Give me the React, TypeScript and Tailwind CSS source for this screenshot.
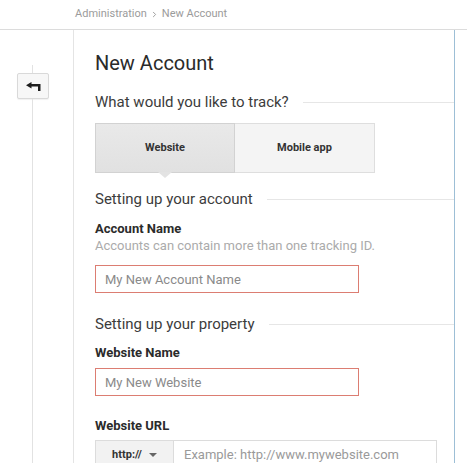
import { ChevronRight } from 'lucide-react'

function SectionTitle({ children }: { children: string }) {
  return (
    <div className="flex items-center gap-[14px]">
      <span className="text-[15px] leading-[20px] text-[#3c3c3c] whitespace-nowrap">
        {children}
      </span>
      <div className="h-px flex-1 bg-[#e6e6e6]" />
    </div>
  )
}

function BackIcon() {
  return (
    <svg width="15" height="9" viewBox="0 0 15 9" fill="#1e1e1e">
      <path d="M0 3.2 L5.5 0 V2 H14.5 V9 H12 V4.5 H5.5 V6.4 Z" />
    </svg>
  )
}

export default function App() {
  return (
    <div className="w-[467px] h-[463px] overflow-hidden bg-white flex flex-col font-['Roboto',sans-serif]">
      <header className="h-[30px] shrink-0 border-b border-[#dcdcdc] pl-[75px] flex items-center text-[11px] text-[#9b9b9b]">
        <span>Administration</span>
        <ChevronRight className="size-[9px] mx-[3px]" strokeWidth={2.5} />
        <span>New Account</span>
      </header>

      <div className="flex flex-1 min-h-0">
        <aside className="w-[73px] shrink-0 flex flex-col items-start">
          <div className="h-[35px]" />
          <div className="ml-[32px] w-px h-[8px] bg-[#e2e2e2]" />
          <button className="ml-[17px] w-[32px] h-[26px] rounded-[2px] border border-[#d9d9d9] bg-[#f7f7f7] flex items-center justify-center shadow-[0_1px_1px_rgba(0,0,0,0.06)]">
            <BackIcon />
          </button>
          <div className="ml-[32px] w-px flex-1 bg-[#e2e2e2]" />
        </aside>

        <main className="w-[382px] shrink-0 border-l border-[#e4e4e4] border-r border-r-[#9dbfd6] pl-[21px] pt-[21px]">
          <h1 className="text-[20px] leading-[24px] text-[#2a2a2a]">New Account</h1>

          <div className="mt-[17px]">
            <SectionTitle>What would you like to track?</SectionTitle>
          </div>

          <div className="mt-[11px] flex w-[280px] h-[50px] text-[11px] font-bold text-[#333]">
            <button className="relative w-[140px] border border-[#d2d2d2] bg-gradient-to-b from-[#e9e9e9] to-[#e1e1e1]">
              Website
              <span className="absolute left-1/2 top-full -translate-x-1/2 w-0 h-0 border-l-[7px] border-r-[7px] border-t-[6px] border-l-transparent border-r-transparent border-t-[#e3e3e3]" />
            </button>
            <button className="w-[140px] border border-l-0 border-[#dedede] bg-[#f4f4f4]">
              Mobile app
            </button>
          </div>

          <div className="mt-[16px]">
            <SectionTitle>Setting up your account</SectionTitle>
          </div>

          <div className="mt-[12px] text-[13px] leading-[16px] font-bold text-[#2b2b2b]">
            Account Name
          </div>
          <div className="mt-[1px] text-[13px] leading-[16px] text-[#ababab]">
            Accounts can contain more than one tracking ID.
          </div>
          <input
            className="mt-[11px] block w-[264px] h-[28px] border border-[#dc7d72] px-[9px] text-[13px] text-[#333] placeholder:text-[#8a8a8a] outline-none"
            placeholder="My New Account Name"
          />

          <div className="mt-[21px]">
            <SectionTitle>Setting up your property</SectionTitle>
          </div>

          <div className="mt-[11px] text-[13px] leading-[16px] font-bold text-[#2b2b2b]">
            Website Name
          </div>
          <input
            className="mt-[7px] block w-[264px] h-[28px] border border-[#dc7d72] px-[9px] text-[13px] text-[#333] placeholder:text-[#8a8a8a] outline-none"
            placeholder="My New Website"
          />

          <div className="mt-[22px] text-[13px] leading-[16px] font-bold text-[#2b2b2b]">
            Website URL
          </div>
          <div className="mt-[6px] flex w-[342px] h-[30px]">
            <button className="w-[79px] shrink-0 border border-[#dcdcdc] bg-[#f2f2f2] flex items-center justify-center gap-[7px] text-[11px] font-bold text-[#333]">
              <span>http://</span>
              <span className="w-0 h-0 border-l-[4px] border-r-[4px] border-t-[4px] border-l-transparent border-r-transparent border-t-[#666]" />
            </button>
            <input
              className="flex-1 min-w-0 border border-l-0 border-[#dcdcdc] px-[10px] text-[13px] text-[#333] placeholder:text-[#9a9a9a] outline-none"
              placeholder="Example: http://www.mywebsite.com"
            />
          </div>
        </main>
      </div>
    </div>
  )
}
